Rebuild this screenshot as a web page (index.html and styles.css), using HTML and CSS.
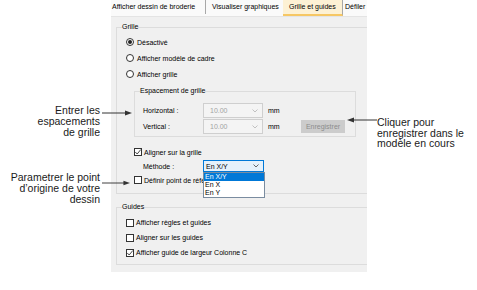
FILE: index.html
```html
<!DOCTYPE html>
<html lang="fr">
<head>
    <meta charset="UTF-8">
    <title>Grille et guides</title>
    <link rel="stylesheet" href="styles.css">
</head>
<body>
<div class="figure">
    <div class="notes notes-left">
        <div class="note note-spacing">
            Entrer les<br>espacements<br>de grille
            <svg class="arrow arrow-right" width="30" height="6" viewBox="0 0 30 6"><line x1="0" y1="3" x2="25" y2="3" stroke="#333" stroke-width="1"/><polygon points="30,3 23,0.5 23,5.5" fill="#333"/></svg>
        </div>
        <div class="note note-origin">
            Parametrer le point<br>d’origine de votre<br>dessin
            <svg class="arrow arrow-right" width="30" height="6" viewBox="0 0 30 6"><line x1="0" y1="3" x2="25" y2="3" stroke="#333" stroke-width="1"/><polygon points="30,3 23,0.5 23,5.5" fill="#333"/></svg>
        </div>
    </div>

    <div class="dialog">
        <div class="tabs">
            <div class="tab tab-embroidery">Afficher dessin de broderie</div>
            <div class="tab tab-graphics">Visualiser graphiques</div>
            <div class="tab tab-grid active">Grille et guides</div>
            <div class="tab tab-scroll">Défiler</div>
        </div>

        <div class="page">
            <div class="group group-grid">
                <div class="group-title">Grille</div>
                <div class="option option-first"><span class="radio checked"></span>Désactivé</div>
                <div class="option"><span class="radio"></span>Afficher modèle de cadre</div>
                <div class="option"><span class="radio"></span>Afficher grille</div>

                <div class="group group-spacing">
                    <div class="group-title">Espacement de grille</div>
                    <div class="field-row field-first">
                        <span class="field-label">Horizontal :</span>
                        <span class="combo disabled">10.00<svg class="chevron" width="6" height="4" viewBox="0 0 6 4"><polyline points="0.5,0.5 3,3 5.5,0.5" fill="none" stroke="#b4b4b4" stroke-width="0.8"/></svg></span>
                        <span class="unit">mm</span>
                    </div>
                    <div class="field-row">
                        <span class="field-label">Vertical :</span>
                        <span class="combo disabled">10.00<svg class="chevron" width="6" height="4" viewBox="0 0 6 4"><polyline points="0.5,0.5 3,3 5.5,0.5" fill="none" stroke="#b4b4b4" stroke-width="0.8"/></svg></span>
                        <span class="unit">mm</span>
                        <span class="btn disabled">Enregistrer</span>
                    </div>
                </div>

                <div class="option option-inner option-after-box"><span class="check checked"><svg width="8" height="8" viewBox="0 0 8 8"><polyline points="1.3,4 3.2,6 6.8,1.5" fill="none" stroke="#333" stroke-width="0.9"/></svg></span>Aligner sur la grille</div>
                <div class="field-row method-row">
                    <span class="field-label">Méthode :</span>
                    <span class="combo open">En X/Y<svg class="chevron" width="6" height="4" viewBox="0 0 6 4"><polyline points="0.5,0.5 3,3 5.5,0.5" fill="none" stroke="#444" stroke-width="0.8"/></svg></span>
                    <ul class="combo-list">
                        <li class="selected">En X/Y</li>
                        <li>En X</li>
                        <li>En Y</li>
                    </ul>
                </div>
                <div class="option option-inner"><span class="check"></span>Définir point de référence</div>
            </div>

            <div class="group group-guides">
                <div class="group-title">Guides</div>
                <div class="option option-tight option-first"><span class="check"></span>Afficher règles et guides</div>
                <div class="option option-tight"><span class="check"></span>Aligner sur les guides</div>
                <div class="option option-tight"><span class="check checked"><svg width="8" height="8" viewBox="0 0 8 8"><polyline points="1.3,4 3.2,6 6.8,1.5" fill="none" stroke="#333" stroke-width="0.9"/></svg></span>Afficher guide de largeur Colonne C</div>
            </div>
        </div>
    </div>

    <div class="notes notes-right">
        <div class="note note-save">
            Cliquer pour<br>enregistrer dans le<br>modèle en cours
            <svg class="arrow arrow-left" width="30" height="6" viewBox="0 0 30 6"><polygon points="0,3 7,0.5 7,5.5" fill="#333"/><line x1="5" y1="3" x2="30" y2="3" stroke="#333" stroke-width="1"/></svg>
        </div>
    </div>
</div>
</body>
</html>
```

FILE: styles.css
```css
/* Page et figure */
body {
    margin: 0;
    background-color: #ffffff;
    font-family: "Liberation Sans", Arial, sans-serif;
    color: #000000;
}

.figure {
    display: flex;
    width: 477px;
    height: 290px;
    overflow: hidden;
}

/* Légendes autour de la capture */
.notes {
    flex: none;
    font-size: 10.5px;
    line-height: 11px;
    color: #1a1a1a;
}

.notes-left {
    width: 111px;
    box-sizing: border-box;
    padding-right: 11px;
    text-align: right;
}

.notes-right {
    width: 110px;
    box-sizing: border-box;
    padding-left: 10px;
}

.note {
    position: relative;
}

.note-spacing {
    margin-top: 105px;
}

.note-origin {
    margin-top: 34px;
}

.note-save {
    margin-top: 117px;
    line-height: 10.5px;
}

.arrow {
    position: absolute;
    z-index: 2;
}

.arrow-right {
    left: calc(100% + 2px);
    top: 5px;
}

.note-origin .arrow-right {
    top: 8px;
    width: 28px;
}

.arrow-left {
    left: -30px;
    top: 0;
}

/* Boîte de dialogue */
.dialog {
    flex: none;
    width: 256px;
    height: 272px;
    background-color: #f0f0f0;
    font-size: 7px;
    overflow: hidden;
}

.tabs {
    display: flex;
    height: 16px;
    background-color: #fafafa;
    border-bottom: 1px solid #e4e4e4;
    white-space: nowrap;
}

.tab {
    flex: none;
    box-sizing: border-box;
    height: 14px;
    line-height: 14px;
    padding-left: 6px;
}

.tab-embroidery {
    width: 95px;
    padding-left: 1px;
    border-right: 1px solid #a8a8a8;
}

.tab-graphics {
    width: 77px;
}

.tab-grid {
    width: 60px;
    border-right: 1px solid #a8a8a8;
}

.tab.active {
    height: 16px;
    background-color: #fdf1d4;
    border-bottom: 2px solid #f6c764;
}

.tab-scroll {
    padding-left: 2px;
}

.page {
    padding: 10px 0 6px 5px;
}

/* Groupes */
.group {
    border: 1px solid #dcdcdc;
    border-right: none;
}

.group-title {
    width: fit-content;
    margin: -6px 0 0 5px;
    line-height: 9px;
    background-color: #f0f0f0;
}

.group-grid {
    padding-bottom: 5px;
}

.group-spacing {
    width: 222px;
    box-sizing: border-box;
    margin: 9px 0 0 17px;
    border-right: 1px solid #dcdcdc;
    padding-bottom: 1px;
}

.group-guides {
    margin-top: 13px;
    padding-bottom: 4px;
}

/* Options */
.option {
    display: flex;
    align-items: center;
    height: 16px;
    padding-left: 9px;
    white-space: nowrap;
}

.option-first {
    margin-top: 3px;
}

.option-inner {
    padding-left: 17px;
}

.option-after-box {
    margin-top: 7px;
}

.option-tight {
    height: 15px;
}

.option-tight.option-first {
    margin-top: 4px;
}

.radio {
    position: relative;
    flex: none;
    width: 8px;
    height: 8px;
    box-sizing: border-box;
    margin-right: 3px;
    border: 1px solid #333333;
    border-radius: 50%;
    background-color: #ffffff;
}

.radio.checked::after {
    content: "";
    position: absolute;
    left: 1px;
    top: 1px;
    width: 4px;
    height: 4px;
    border-radius: 50%;
    background-color: #222222;
}

.check {
    display: flex;
    flex: none;
    width: 8px;
    height: 8px;
    box-sizing: border-box;
    margin-right: 2px;
    border: 1px solid #333333;
    background-color: #ffffff;
}

.check svg {
    margin: -1px;
}

/* Champs */
.field-row {
    position: relative;
    display: flex;
    align-items: center;
    height: 15px;
    padding-left: 8px;
    margin-bottom: 1px;
}

.field-first {
    margin-top: 8px;
}

.field-label {
    flex: none;
    width: 60px;
}

.combo {
    flex: none;
    display: flex;
    align-items: center;
    justify-content: space-between;
    width: 60px;
    height: 15px;
    box-sizing: border-box;
    padding: 0 4px 0 6px;
    border: 1px solid #cfcfcf;
    background-color: #f4f4f4;
}

.combo.disabled {
    color: #a3a3a3;
}

.unit {
    flex: none;
    width: 38px;
    box-sizing: border-box;
    padding-left: 5px;
}

.btn {
    flex: none;
    width: 44px;
    height: 13px;
    line-height: 13px;
    text-align: center;
    background-color: #cccccc;
}

.btn.disabled {
    color: #8d8d8d;
}

.method-row {
    height: 12px;
    padding-left: 26px;
    margin-bottom: 0;
}

.combo.open {
    width: 61px;
    height: 12px;
    padding-left: 2px;
    border-color: #0078d7;
    background-color: #e5f1fb;
}

.combo-list {
    position: absolute;
    left: 86px;
    top: 12px;
    z-index: 3;
    width: 60px;
    margin: 0;
    padding: 0;
    list-style: none;
    border: 1px solid #7a8ca0;
    background-color: #ffffff;
}

.combo-list li {
    height: 8px;
    line-height: 8px;
    padding-left: 1px;
}

.combo-list li.selected {
    background-color: #0078d7;
    color: #ffffff;
}
```
